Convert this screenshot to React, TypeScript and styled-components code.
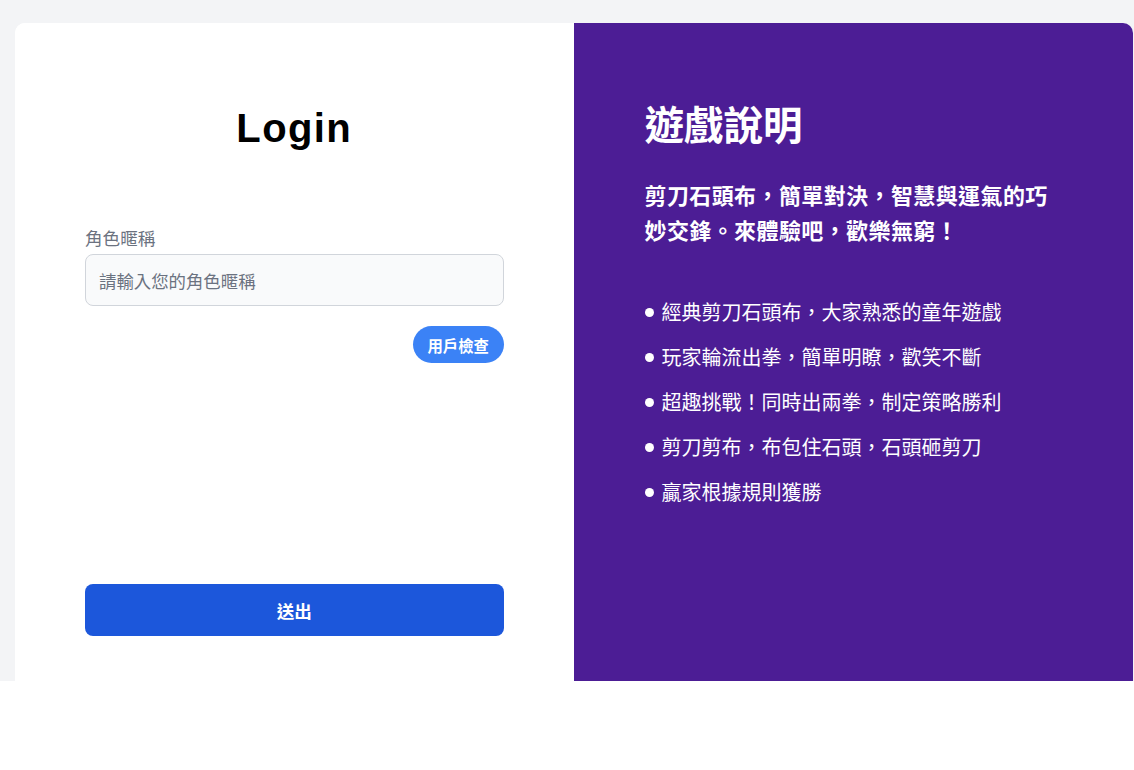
import React from "react";
import styled, { createGlobalStyle } from "styled-components";

const GlobalStyle = createGlobalStyle`
  html, body { margin: 0; padding: 0; background: #ffffff; }
  body { font-family: "Noto Sans CJK TC", "Noto Sans", sans-serif; }
  * { box-sizing: border-box; }
`;

const Page = styled.div`
  height: 681px;
  overflow: hidden;
  background: #f3f4f6;
  padding: 23px 1px 0 15px;
`;

const Card = styled.div`
  display: flex;
  height: 720px;
  border-radius: 10px;
  overflow: hidden;
  background: #ffffff;
`;

const LeftPanel = styled.section`
  flex: 1 1 0;
  display: flex;
  flex-direction: column;
  padding: 81px 70px 0;
  background: #ffffff;
`;

const Title = styled.h1`
  margin: 0;
  height: 48px;
  line-height: 48px;
  font-family: "Liberation Sans", Arial, sans-serif;
  font-weight: 700;
  font-size: 40px;
  letter-spacing: 1.4px;
  color: #000000;
  text-align: center;
`;

const Label = styled.label`
  display: block;
  margin-top: 73px;
  margin-bottom: 3px;
  line-height: 26px;
  font-size: 17.6px;
  color: #6b7280;
`;

const Input = styled.input`
  width: 100%;
  height: 52px;
  padding: 0 13px;
  border: 1px solid #d1d5db;
  border-radius: 8px;
  background: #f9fafb;
  font-family: "Noto Sans CJK TC", "Noto Sans", sans-serif;
  font-size: 17.4px;
  color: #111827;
  outline: none;
  &::placeholder { color: #6b7280; }
`;

const CheckRow = styled.div`
  display: flex;
  justify-content: flex-end;
  margin-top: 20px;
`;

const PillButton = styled.button`
  height: 37px;
  padding: 0 14.5px;
  border: none;
  border-radius: 999px;
  background: #3b82f6;
  color: #ffffff;
  font-family: "Noto Sans CJK TC", "Noto Sans", sans-serif;
  font-weight: 700;
  font-size: 15.4px;
  cursor: pointer;
`;

const SubmitButton = styled.button`
  margin-top: 221px;
  width: 100%;
  height: 52px;
  border: none;
  border-radius: 8px;
  background: #1c57db;
  color: #ffffff;
  font-family: "Noto Sans CJK TC", "Noto Sans", sans-serif;
  font-weight: 700;
  font-size: 17.6px;
  cursor: pointer;
`;

const RightPanel = styled.section`
  flex: 1 1 0;
  padding: 76px 70px 0 71px;
  background: #4c1d95;
  color: #ffffff;
`;

const InfoTitle = styled.h2`
  margin: 0;
  height: 48px;
  line-height: 48px;
  font-size: 39.5px;
  font-weight: 700;
`;

const Intro = styled.p`
  margin: 30px 0 0;
  line-height: 35px;
  font-size: 22px;
  font-weight: 700;
  letter-spacing: 0.4px;
`;

const List = styled.ul`
  margin: 50px 0 0;
  padding: 0;
  list-style: none;
  display: flex;
  flex-direction: column;
  gap: 15px;
`;

const Item = styled.li`
  display: flex;
  align-items: center;
  line-height: 30px;
  font-size: 20px;
`;

const Dot = styled.span`
  width: 9px;
  height: 9px;
  margin-right: 8px;
  border-radius: 50%;
  background: #ffffff;
  flex: none;
`;

const rules = [
  "經典剪刀石頭布，大家熟悉的童年遊戲",
  "玩家輪流出拳，簡單明瞭，歡笑不斷",
  "超趣挑戰！同時出兩拳，制定策略勝利",
  "剪刀剪布，布包住石頭，石頭砸剪刀",
  "贏家根據規則獲勝",
];

export default function App() {
  return (
    <>
      <GlobalStyle />
      <Page>
        <Card>
          <LeftPanel>
            <Title>Login</Title>
            <Label htmlFor="nick">角色暱稱</Label>
            <Input id="nick" placeholder="請輸入您的角色暱稱" />
            <CheckRow>
              <PillButton type="button">用戶檢查</PillButton>
            </CheckRow>
            <SubmitButton type="button">送出</SubmitButton>
          </LeftPanel>
          <RightPanel>
            <InfoTitle>遊戲說明</InfoTitle>
            <Intro>剪刀石頭布，簡單對決，智慧與運氣的巧妙交鋒。來體驗吧，歡樂無窮！</Intro>
            <List>
              {rules.map((r) => (
                <Item key={r}>
                  <Dot />
                  {r}
                </Item>
              ))}
            </List>
          </RightPanel>
        </Card>
      </Page>
    </>
  );
}
